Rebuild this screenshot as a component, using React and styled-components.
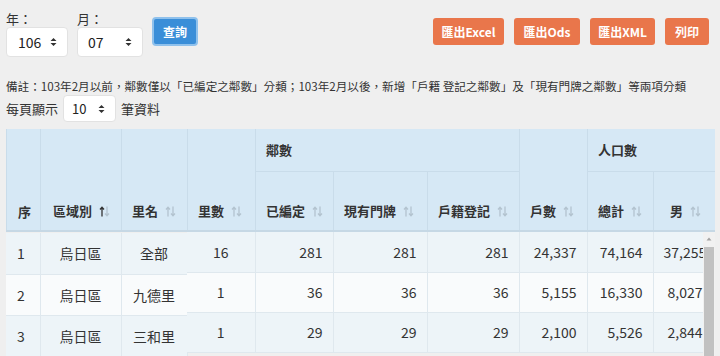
import React from 'react';
import styled, { createGlobalStyle } from 'styled-components';

const GlobalStyle = createGlobalStyle`
  body {
    margin: 0;
    background: #efefef;
    font-family: 'Noto Sans CJK TC', 'Noto Sans', sans-serif;
    color: #333;
  }
`;

const Page = styled.div`
  padding: 10px 5px 0 6px;
  width: 709px;
`;

const Toolbar = styled.div`
  display: flex;
  align-items: flex-start;
`;

const Field = styled.div`
  display: flex;
  flex-direction: column;
  margin-right: 9px;
`;

const Label = styled.div`
  font-size: 13px;
  line-height: 17px;
  height: 17px;
`;

const SelectBox = styled.div`
  box-sizing: border-box;
  width: ${(p) => p.width}px;
  height: ${(p) => p.height || 30}px;
  background: #fff;
  border: 1px solid #e2e2e2;
  border-radius: 4px;
  display: flex;
  align-items: center;
  justify-content: space-between;
  padding: 0 10px 0 ${(p) => p.padLeft || 11}px;
  font-size: ${(p) => p.fontSize || 14}px;
  color: #222;
`;

const QueryButton = styled.button`
  margin-top: 7px;
  box-sizing: border-box;
  width: 46px;
  height: 29px;
  background: #3a8ed8;
  border: 2px solid #8fc1ec;
  border-radius: 4px;
  color: #fff;
  font-family: inherit;
  font-weight: bold;
  font-size: 12px;
  padding: 0;
`;

const Actions = styled.div`
  margin-left: auto;
  margin-top: 8px;
  display: flex;
  gap: 10px;
  padding-right: 6px;
`;

const OrangeButton = styled.button`
  width: ${(p) => p.width}px;
  height: 27px;
  padding: 0;
  background: #e9764b;
  border: none;
  border-radius: 3px;
  color: #fff;
  font-family: inherit;
  font-weight: bold;
  font-size: 12px;
`;

const Note = styled.div`
  margin-top: 21px;
  font-size: 11.6px;
  line-height: 16px;
  color: #333;
`;

const PageSize = styled.div`
  display: flex;
  align-items: center;
  gap: 5px;
  margin-top: 1px;
  font-size: 13px;
`;

const TableFrame = styled.div`
  margin-top: 7px;
  width: 709px;
  overflow: hidden;
`;

const HeadTable = styled.table`
  border-collapse: collapse;
  table-layout: fixed;
  width: 709px;
  background: #d6e8f5;
`;

const Th = styled.th`
  box-sizing: border-box;
  height: ${(p) => p.h}px;
  padding: 0 0 ${(p) => (p.top ? 0 : 9)}px ${(p) => p.padLeft || 10}px;
  text-align: left;
  vertical-align: ${(p) => (p.top ? 'middle' : 'bottom')};
  font-size: 13px;
  font-weight: bold;
  color: #333;
  border: 1px solid #c9dcea;
  border-top: none;
  border-bottom: ${(p) => (p.top ? '1px solid #c9dcea' : '2px solid #c6d8e5')};
  white-space: nowrap;
`;

const SortWrap = styled.span`
  display: inline-block;
  margin-left: 7px;
  vertical-align: -1px;
`;

const BodyRow = styled.div`
  display: flex;
  align-items: flex-start;
`;

const LeftBody = styled.div`
  padding-top: 1px;
  width: 181px;
  flex: none;
`;

const RightViewport = styled.div`
  width: 516px;
  overflow: hidden;
  flex: none;
`;

const BodyTable = styled.table`
  border-collapse: collapse;
  table-layout: fixed;
  width: ${(p) => p.width}px;
`;

const Tr = styled.tr`
  background: ${(p) => (p.odd ? '#edf4f8' : '#f9fbfc')};
  height: ${(p) => p.h}px;
`;

const Td = styled.td`
  box-sizing: border-box;
  font-size: 14px;
  color: #333;
  text-align: ${(p) => p.align || 'right'};
  padding: 0 10px 0 ${(p) => (p.align === 'left' ? 11 : 10)}px;
  border-right: 1px solid #dfe8ee;
  border-bottom: 1px solid #dfe8ee;
  white-space: nowrap;
`;

const ScrollTrack = styled.div`
  width: 12px;
  height: 130px;
  background: #f1f1f1;
  display: flex;
  flex-direction: column;
  align-items: center;
  flex: none;
`;

const ScrollThumb = styled.div`
  margin-top: 4px;
  width: 10px;
  flex: 1;
  background: #c1c1c1;
`;

const Caret = () => (
  <svg width="7" height="10" viewBox="0 0 7 10">
    <path d="M0.5 4 L3.5 1 L6.5 4 Z M0.5 6 L3.5 9 L6.5 6 Z" fill="#333" />
  </svg>
);

const SortIcon = ({ active }) => (
  <SortWrap>
    <svg width="11" height="11" viewBox="0 0 11 11">
      <path d="M3 10.5 V1.5 M1 3.5 L3 1.2 L5 3.5" stroke={active ? '#333' : '#b3c3cf'} strokeWidth="1.3" fill="none" />
      <path d="M8 0.5 V9.5 M6 7.5 L8 9.8 L10 7.5" stroke="#b3c3cf" strokeWidth="1.3" fill="none" />
    </svg>
  </SortWrap>
);

const rows = [
  { no: 1, area: '烏日區', li: '全部', liCount: 16, coded: 281, plate: 281, reg: 281, hh: '24,337', total: '74,164', male: '37,255' },
  { no: 2, area: '烏日區', li: '九德里', liCount: 1, coded: 36, plate: 36, reg: 36, hh: '5,155', total: '16,330', male: '8,027' },
  { no: 3, area: '烏日區', li: '三和里', liCount: 1, coded: 29, plate: 29, reg: 29, hh: '2,100', total: '5,526', male: '2,844' },
];

const leftCols = [34, 81, 66];
const rightCols = [68, 78, 94, 92, 68, 66, 60];

const Cols = ({ widths }) => (
  <colgroup>
    {widths.map((w, i) => <col key={`c-${i}`} style={{ width: w }} />)}
  </colgroup>
);

const App = () => (
  <Page>
    <GlobalStyle />
    <Toolbar>
      <Field>
        <Label>年：</Label>
        <SelectBox width={62}>106<Caret /></SelectBox>
      </Field>
      <Field>
        <Label>月：</Label>
        <SelectBox width={66} padLeft={10}>07<Caret /></SelectBox>
      </Field>
      <QueryButton>查詢</QueryButton>
      <Actions>
        <OrangeButton width={71}>匯出Excel</OrangeButton>
        <OrangeButton width={66}>匯出Ods</OrangeButton>
        <OrangeButton width={65}>匯出XML</OrangeButton>
        <OrangeButton width={44}>列印</OrangeButton>
      </Actions>
    </Toolbar>
    <Note>備註：103年2月以前，鄰數僅以「已編定之鄰數」分類；103年2月以後，新增「戶籍 登記之鄰數」及「現有門牌之鄰數」等兩項分類</Note>
    <PageSize>
      每頁顯示
      <SelectBox width={53} height={27} padLeft={8} fontSize={13}>10<Caret /></SelectBox>
      筆資料
    </PageSize>
    <TableFrame>
      <HeadTable>
        <Cols widths={[...leftCols, 68, 78, 94, 92, 68, 66, 62]} />
        <thead>
          <tr>
            <Th rowSpan={2} h={102} padLeft={11}>序</Th>
            <Th rowSpan={2} h={102} padLeft={12}>區域別<SortIcon active /></Th>
            <Th rowSpan={2} h={102} padLeft={10}>里名<SortIcon /></Th>
            <Th rowSpan={2} h={102} padLeft={10}>里數<SortIcon /></Th>
            <Th colSpan={3} h={42} top>鄰數</Th>
            <Th rowSpan={2} h={102} padLeft={10}>戶數<SortIcon /></Th>
            <Th colSpan={2} h={42} top>人口數</Th>
          </tr>
          <tr>
            <Th h={60}>已編定<SortIcon /></Th>
            <Th h={60}>現有門牌<SortIcon /></Th>
            <Th h={60}>戶籍登記<SortIcon /></Th>
            <Th h={60}>總計<SortIcon /></Th>
            <Th h={60} padLeft={16}>男<SortIcon /></Th>
          </tr>
        </thead>
      </HeadTable>
      <BodyRow>
        <LeftBody>
          <BodyTable width={181}>
            <Cols widths={leftCols} />
            <tbody>
              {rows.map((r) => (
                <Tr key={`l-${r.no}`} odd={r.no % 2 === 1} h={41}>
                  <Td align="left">{r.no}</Td>
                  <Td align="center">{r.area}</Td>
                  <Td align="center">{r.li}</Td>
                </Tr>
              ))}
            </tbody>
          </BodyTable>
        </LeftBody>
        <RightViewport>
          <BodyTable width={526}>
            <Cols widths={rightCols} />
            <tbody>
              {rows.map((r) => (
                <Tr key={`r-${r.no}`} odd={r.no % 2 === 1} h={40}>
                  <Td align="center">{r.liCount}</Td>
                  <Td>{r.coded}</Td>
                  <Td>{r.plate}</Td>
                  <Td>{r.reg}</Td>
                  <Td>{r.hh}</Td>
                  <Td>{r.total}</Td>
                  <Td>{r.male}</Td>
                </Tr>
              ))}
            </tbody>
          </BodyTable>
        </RightViewport>
        <ScrollTrack>
          <svg width="8" height="8" viewBox="0 0 8 8" style={{ marginTop: 3 }}>
            <path d="M1.5 5.5 L4 2.5 L6.5 5.5 Z" fill="#a3a3a3" />
          </svg>
          <ScrollThumb />
        </ScrollTrack>
      </BodyRow>
    </TableFrame>
  </Page>
);

export default App;
